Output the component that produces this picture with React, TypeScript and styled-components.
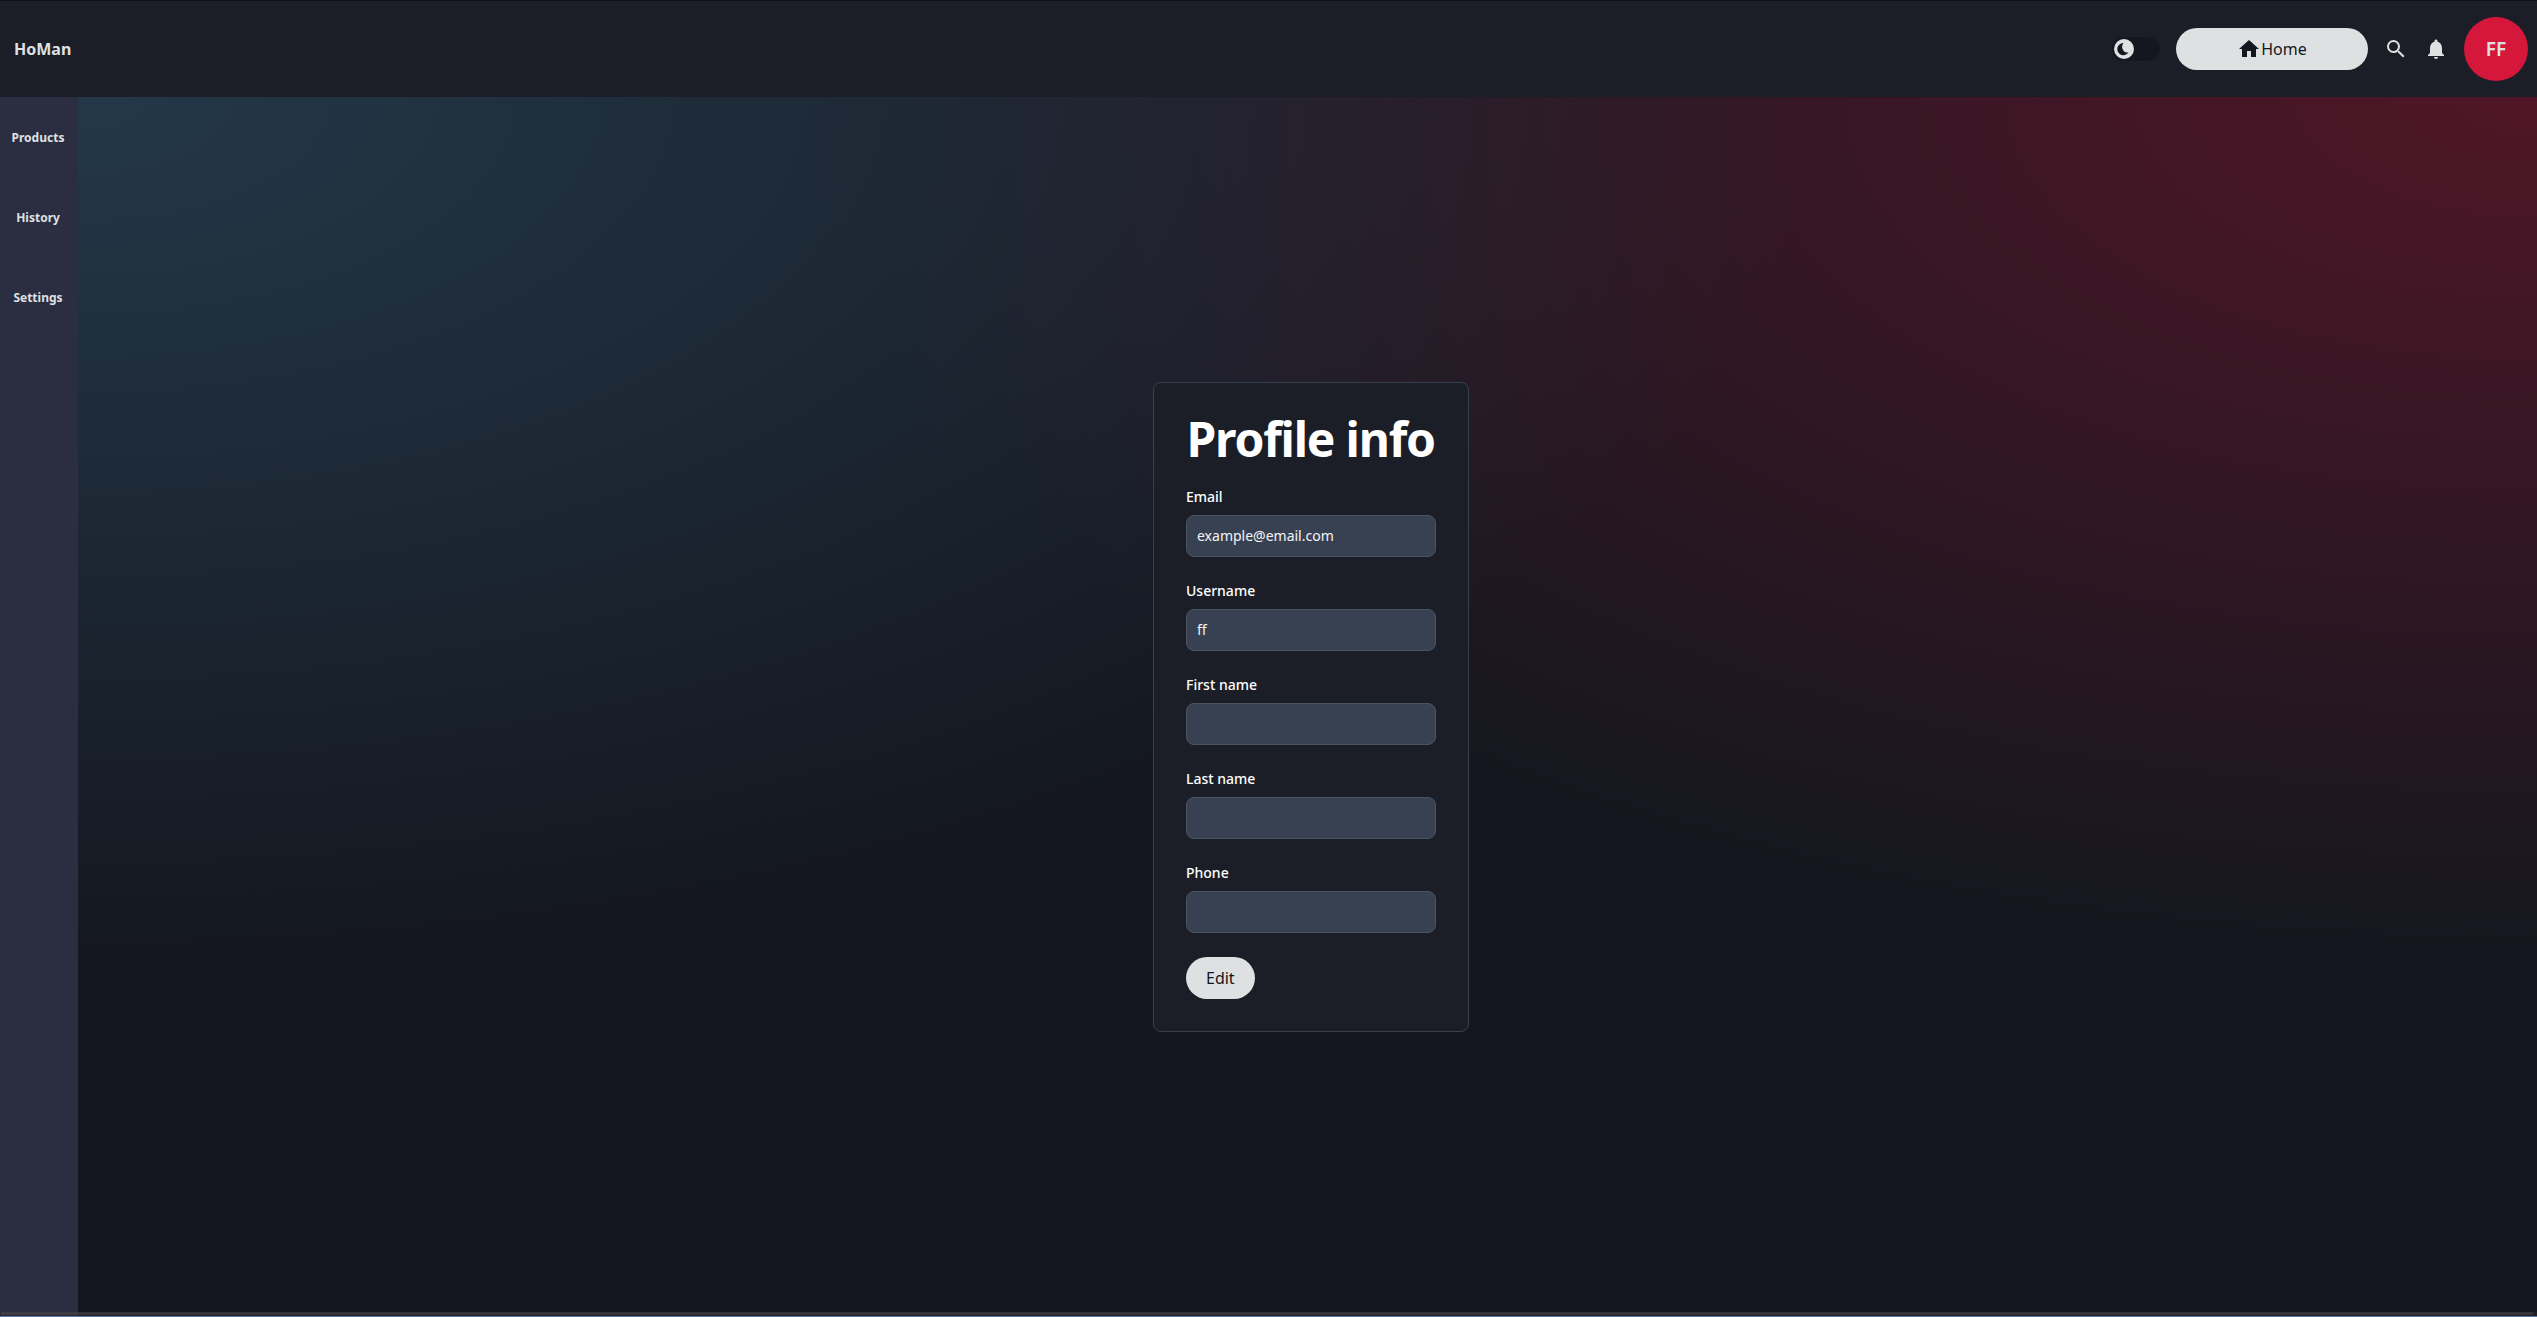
import React from "react";
import styled, { createGlobalStyle } from "styled-components";
import { MdHome, MdSearch, MdNotifications } from "react-icons/md";

const GlobalStyle = createGlobalStyle`
  *, *::before, *::after { box-sizing: border-box; }
  html, body { margin: 0; padding: 0; background: #14171f; overflow: hidden; }
  body, input, button { font-family: "Noto Sans", sans-serif; }
`;

const Page = styled.div`
  position: relative;
  display: flex;
  flex-direction: column;
  width: 100vw;
  height: 100vh;
  overflow: hidden;
  background: #14171f;
`;

const Header = styled.header`
  display: flex;
  align-items: center;
  justify-content: space-between;
  flex: none;
  height: 97px;
  padding: 0 9px 0 14px;
  border-top: 1px solid #111113;
  background: #1b1e26;
`;

const Brand = styled.div`
  color: #dfe0e2;
  font-size: 16px;
  line-height: 24px;
  font-weight: 700;
`;

const Actions = styled.div`
  display: flex;
  align-items: center;
`;

const Toggle = styled.div`
  display: flex;
  align-items: center;
  width: 50px;
  height: 26px;
  padding: 0 2px 0 1.5px;
  margin-right: 15px;
  border: 1px solid #1c1f2e;
  border-radius: 13px;
  background: #14171f;
`;

const Knob = styled.div`
  display: flex;
  align-items: center;
  justify-content: center;
  width: 20px;
  height: 20px;
  border-radius: 50%;
  background: #dfe0e2;
  color: #14171f;
`;

const PillButton = styled.button<{ $width?: number }>`
  display: flex;
  align-items: center;
  justify-content: center;
  width: ${(p) => (p.$width ? `${p.$width}px` : "auto")};
  height: 42px;
  padding: 0 20px;
  border: 0;
  border-radius: 21px;
  background: #dfe0e2;
  color: #14171f;
  font-size: 16px;
  line-height: 24px;
`;

const IconSlot = styled.div`
  display: flex;
  margin-left: 16px;
  color: #dfe0e2;
`;

const Avatar = styled.div`
  display: flex;
  align-items: center;
  justify-content: center;
  width: 64px;
  height: 64px;
  margin-left: 16px;
  border-radius: 50%;
  background: #d5173b;
  color: #dfe0e2;
  font-size: 19px;
  font-weight: 600;
`;

const Body = styled.div`
  display: flex;
  flex: 1;
  min-height: 0;
`;

const Sidebar = styled.nav`
  display: flex;
  flex-direction: column;
  flex: none;
  width: 78px;
  background: #2b2d40;
`;

const NavItem = styled.a`
  display: flex;
  align-items: center;
  justify-content: center;
  height: 80px;
  padding-right: 2px;
  color: #dfe0e2;
  font-size: 12px;
  font-weight: 700;
`;

const Main = styled.main`
  display: flex;
  align-items: center;
  justify-content: center;
  flex: 1;
  padding-left: 7px;
  background:
    radial-gradient(at 0% 0%, #243849 0, transparent 50%),
    radial-gradient(at 100% 0%, #501627 0, transparent 50%),
    #14171f;
`;

const Card = styled.form`
  display: flex;
  flex-direction: column;
  gap: 24px;
  width: 316px;
  padding: 32px;
  border: 1px solid #384050;
  border-radius: 8px;
  background: #1b1e26;
`;

const Title = styled.h1`
  margin: 0;
  padding-left: 0.5px;
  color: #fff;
  font-size: 48px;
  line-height: 48px;
  font-weight: 700;
  letter-spacing: -0.025em;
  white-space: nowrap;
`;

const Field = styled.label`
  display: flex;
  flex-direction: column;
  gap: 8px;
  color: #fff;
  font-size: 14px;
  line-height: 20px;
  font-weight: 500;
`;

const Input = styled.input`
  width: 100%;
  height: 42px;
  padding: 9px 10px 11px;
  border: 1px solid #4a5362;
  border-radius: 8px;
  background: #384151;
  color: #f3f4f6;
  font-size: 14px;
  line-height: 20px;
`;

const Footer = styled.div`
  display: flex;
`;

const ScrollTrack = styled.div`
  position: absolute;
  left: 0;
  right: 0;
  bottom: 0;
  height: 5px;
  padding: 0 4px 0 1px;
  border-bottom: 1px solid #5b79ab;
  background: rgba(40, 38, 40, 0.5);
`;

const ScrollThumb = styled.div`
  height: 3px;
  background: rgba(120, 118, 120, 0.25);
`;

const fields = [
  { label: "Email", value: "example@email.com" },
  { label: "Username", value: "ff" },
  { label: "First name", value: "" },
  { label: "Last name", value: "" },
  { label: "Phone", value: "" },
];

const MoonIcon = () => (
  <svg width="14" height="14" viewBox="-0.4 0 14 14" fill="currentColor">
    <path d="M6.2 1A6.1 6.1 0 1 0 11 10.6A5.8 5.8 0 0 1 6.2 1Z" />
  </svg>
);

export default function App() {
  return (
    <Page>
      <GlobalStyle />
      <Header>
        <Brand>HoMan</Brand>
        <Actions>
          <Toggle>
            <Knob>
              <MoonIcon />
            </Knob>
          </Toggle>
          <PillButton type="button" $width={192}>
            <MdHome size={24} />
            Home
          </PillButton>
          <IconSlot>
            <MdSearch size={24} />
          </IconSlot>
          <IconSlot>
            <MdNotifications size={24} />
          </IconSlot>
          <Avatar>FF</Avatar>
        </Actions>
      </Header>
      <Body>
        <Sidebar>
          {["Products", "History", "Settings"].map((name) => (
            <NavItem key={name}>{name}</NavItem>
          ))}
        </Sidebar>
        <Main>
          <Card>
            <Title>Profile info</Title>
            {fields.map((f) => (
              <Field key={f.label}>
                {f.label}
                <Input readOnly defaultValue={f.value} />
              </Field>
            ))}
            <Footer>
              <PillButton type="button">Edit</PillButton>
            </Footer>
          </Card>
        </Main>
      </Body>
      <ScrollTrack>
        <ScrollThumb />
      </ScrollTrack>
    </Page>
  );
}
